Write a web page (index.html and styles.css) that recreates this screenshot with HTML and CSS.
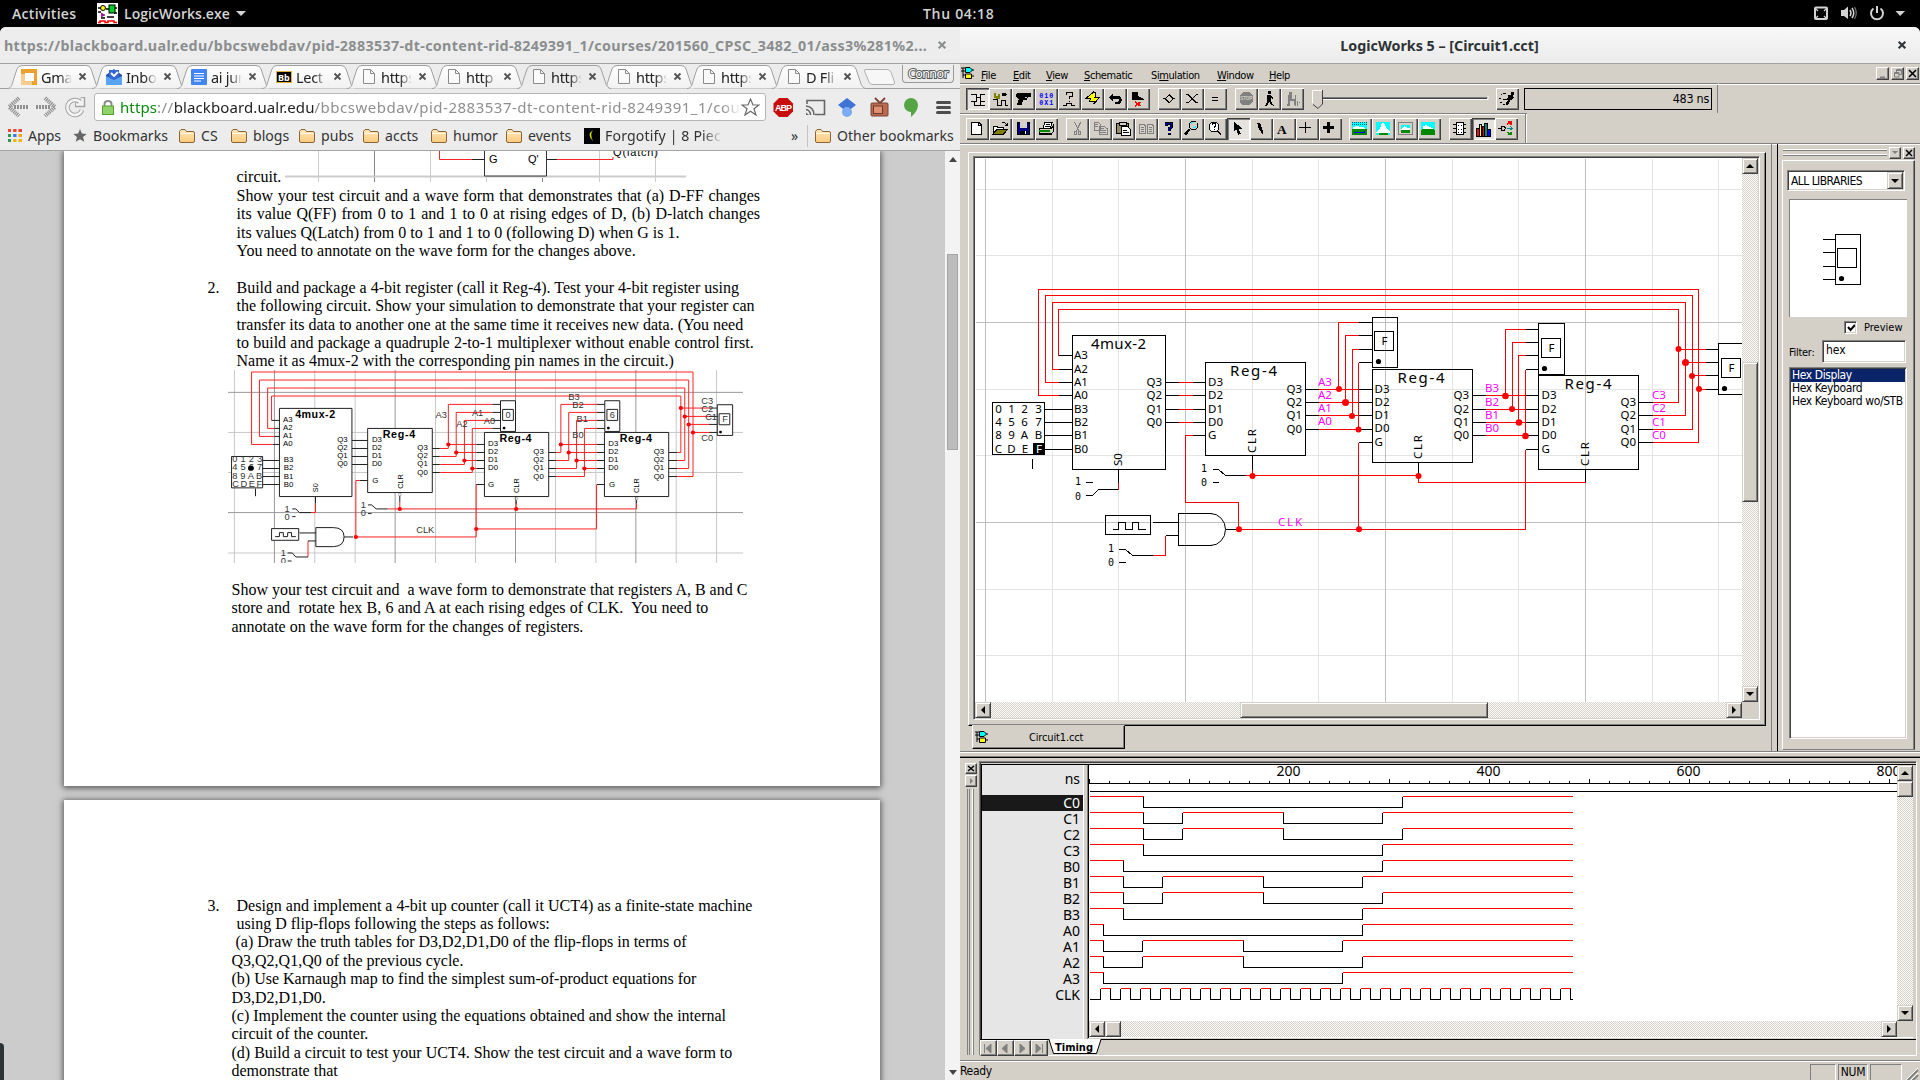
FILE: index.html
```html
<!DOCTYPE html>
<html lang="en">
<head>
<meta charset="utf-8">
<title>Desktop</title>
<link rel="stylesheet" href="styles.css">
</head>
<body>
<svg width="0" height="0" class="defs">
  <defs>
    <linearGradient id="tabfill" x1="0" y1="0" x2="0" y2="1"><stop offset="0" stop-color="#fff"/><stop offset="1" stop-color="#f1f1f1"/></linearGradient>
    <linearGradient id="fold" x1="0" y1="0" x2="0" y2="1"><stop offset="0" stop-color="#ffe9bd"/><stop offset="1" stop-color="#fcc97a"/></linearGradient>
    <symbol id="tabshape" viewBox="0 0 94 25"><path d="M0 24.5C5 24.5 5 20 7 14L10 5Q11.500 1.500 15 1.500H79Q83 1.500 84 5L88 17Q90 24.500 94 24.500" stroke="#a0a0a0"/></symbol>
    <symbol id="folder" viewBox="0 0 16 14"><path d="M.5 12V2.500L2 .5H6L7.500 2.500H14Q15.500 2.500 15.500 4V12Q15.500 13.500 14 13.500H2Q.5 13.500 .5 12Z" fill="url(#fold)" stroke="#8a6439"/><path d="M1 4.500H15" stroke="#fff4dc"/></symbol>
    <symbol id="file" viewBox="0 0 12 15"><path d="M.5.5H7.500L11.500 4.500V14.500H.5Z" fill="#fafafa" stroke="#8b8b8b"/><path d="M7.500.5V4.500H11.500" fill="none" stroke="#8b8b8b"/></symbol>
    <symbol id="x" viewBox="0 0 9 9"><path d="M1.500 1.500L7.500 7.500M7.500 1.500L1.500 7.500" stroke="currentColor" stroke-width="1.900"/></symbol>
    <symbol id="gates" viewBox="0 0 13 14"><path d="M0 5H4M2 2V12M0 2H4M2 9H4M11 4H13M11 10H13" stroke="#000"/><path d="M4.500 1.500H9L11.500 4L9 6.500H4.500Z" fill="#0ff" stroke="#000"/><path d="M4.500 8H10.500V12.500H4.500Z" fill="#ff0" stroke="#000"/></symbol>
  </defs>
</svg>

<header class="topbar">
  <span class="activities">Activities</span>
  <svg class="appicon" width="21" height="21" viewBox="0 0 21 21"><rect width="21" height="21" fill="#fff"/><path d="M1 5H4M1 9H4M9 6H12M17 5H20M17 10H20M4 15H8M10 14H17" stroke="#000" stroke-width="1.500"/><circle cx="6" cy="5" r="2.500" fill="#ff0" stroke="#000"/><rect x="12" y="2" width="6" height="8" fill="#0c2" stroke="#000"/><path d="M4 10L8 12L4 14" fill="#c0c" stroke="#000" stroke-width=".5"/><path d="M1 19.500H3V18H8V19.500H11V18H17V19.500H20" fill="none" stroke="#f00" stroke-width="1.500"/></svg>
  <span class="appname">LogicWorks.exe</span>
  <i class="tri"></i>
  <span class="clock">Thu 04:18</span>
  <svg class="tray" width="92" height="20" viewBox="1814 3 92 20" fill="none" stroke="#d3d3d3" stroke-width="2"><rect x="1815" y="7.500" width="12" height="11.500" rx="1"/><path d="M1815 8L1818 11M1827 8L1824 11M1815 19L1818 16M1827 19L1824 16" stroke-width="1.200"/><path d="M1841 10H1844L1848 6.500V19L1844 16H1841Z" fill="#d3d3d3" stroke="none"/><path d="M1850 10Q1852 13 1850 16M1852 8Q1855.500 13 1852 18" stroke-width="1.500"/><path d="M1854.500 7Q1858 13 1854.500 19" stroke="#777" stroke-width="1.200"/><path d="M1873.500 8.500A6 6 0 1 0 1880.500 8.500M1877 6V13"/><path d="M1895.500 11H1905L1900.200 16Z" fill="#d3d3d3" stroke="none"/></svg>
</header>

<main class="desk">
<section class="browser">
  <div class="titlebar dim"><span class="wtitle">https://blackboard.ualr.edu/bbcswebdav/pid-2883537-dt-content-rid-8249391_1/courses/201560_CPSC_3482_01/ass3%281%2...</span><svg width="10" height="10"><use href="#x"/></svg></div>
  <div class="tabs">
    <div class="tab"><svg class="shape"><use href="#tabshape"/></svg><svg class="ico" width="16" height="16"><rect width="16" height="16" fill="#eda12f"/><path d="M0 5V16H11V12H4V5Z" fill="#f7cc8c"/><rect x="4" y="4" width="9" height="8" fill="#fff"/></svg><span>Gma</span><svg class="cl"><use href="#x"/></svg></div>
    <div class="tab"><svg class="shape"><use href="#tabshape"/></svg><svg class="ico" width="16" height="16"><path d="M0 6L8 0L16 6V8L8 12L0 8Z" fill="#2b4fa8"/><path d="M3 1H13V8L8 11L3 8Z" fill="#3367d6"/><path d="M0 7L8 11L16 7V16H0Z" fill="#5aa2f2"/><path d="M5 4L8 7L12 3" stroke="#fff" stroke-width="1.800" fill="none"/></svg><span>Inbox</span><svg class="cl"><use href="#x"/></svg></div>
    <div class="tab"><svg class="shape"><use href="#tabshape"/></svg><svg class="ico" width="16" height="16"><rect width="16" height="16" rx="1" fill="#4285f4"/><path d="M3 4.500H13M3 7H13M3 9.500H13M3 12H10" stroke="#fff" stroke-width="1.200"/></svg><span>ai jun</span><svg class="cl"><use href="#x"/></svg></div>
    <div class="tab"><svg class="shape"><use href="#tabshape"/></svg><svg class="ico" width="16" height="16"><rect x=".5" y="2.500" width="15" height="11" fill="#000" stroke="#e0b13a"/><text x="2" y="11.500" class="bb">Bb</text></svg><span>Lect</span><svg class="cl"><use href="#x"/></svg></div>
    <div class="tab"><svg class="shape"><use href="#tabshape"/></svg><svg class="ico" width="16" height="15"><use href="#file"/></svg><span>https</span><svg class="cl"><use href="#x"/></svg></div>
    <div class="tab"><svg class="shape"><use href="#tabshape"/></svg><svg class="ico" width="16" height="15"><use href="#file"/></svg><span>http</span><svg class="cl"><use href="#x"/></svg></div>
    <div class="tab on"><svg class="shape"><use href="#tabshape"/></svg><svg class="ico" width="16" height="15"><use href="#file"/></svg><span>https</span><svg class="cl"><use href="#x"/></svg></div>
    <div class="tab"><svg class="shape"><use href="#tabshape"/></svg><svg class="ico" width="16" height="15"><use href="#file"/></svg><span>https</span><svg class="cl"><use href="#x"/></svg></div>
    <div class="tab"><svg class="shape"><use href="#tabshape"/></svg><svg class="ico" width="16" height="15"><use href="#file"/></svg><span>https</span><svg class="cl"><use href="#x"/></svg></div>
    <div class="tab"><svg class="shape"><use href="#tabshape"/></svg><svg class="ico" width="16" height="15"><use href="#file"/></svg><span>D Fli</span><svg class="cl"><use href="#x"/></svg></div>
    <svg class="newtab" width="34" height="18"><path d="M3 1.500H24Q27 1.500 28 4L31.500 14Q32 16.500 30 16.500H10Q7 16.500 6 14L1.500 3Q1 1.500 3 1.500Z" fill="#f7f7f7" stroke="#b0b0b0"/></svg>
    <span class="user">Connor</span>
  </div>
  <div class="urlbar">
    <svg class="nav" width="80" height="22" viewBox="6 96 80 22" fill="none" stroke="#8f8f8f"><path d="M19 98L9 107L19 116" stroke-width="4" stroke-dasharray="1.200 .8"/><path d="M14 107H28" stroke-width="4" stroke-dasharray="2 1"/><path d="M45 98L55 107L45 116" stroke-width="4" stroke-dasharray="1.200 .8"/><path d="M36 107H50" stroke-width="4" stroke-dasharray="2 1"/><path d="M81 103A7.500 7.500 0 1 0 82 110M83 97V105H75" stroke="#a3a3a3" stroke-width="4.500"/><path d="M81 103A7.500 7.500 0 1 0 82 110M82.500 98V104.500H76" stroke="#f4f4f4" stroke-width="2.500"/></svg>
    <div class="omni">
      <svg width="12" height="15"><path d="M2.500 6V4Q2.500 1 6 1T9.500 4V6" fill="none" stroke="#8d8d8d" stroke-width="2"/><rect x=".5" y="6" width="11" height="8.500" fill="#8fd46a" stroke="#56a036"/></svg>
      <span class="url"><b>https</b>://<em>blackboard.ualr.edu</em>/bbcswebdav/pid-2883537-dt-content-rid-8249391_1/cou</span>
      <svg width="19" height="18"><path d="M9.500 1L12 7H18L13 10.800L15 17L9.500 13.200L4 17L6 10.800L1 7H7Z" fill="#fff" stroke="#6a6a6a" stroke-width="1.200"/></svg>
    </div>
    <svg class="exts" width="182" height="22" viewBox="773 96 182 22"><path d="M779 98H787.500L793 103.500V111.500L787.500 117H779L773.500 111.500V103.500Z" fill="#c70d0d"/><text x="775" y="111" class="abp" textLength="17">ABP</text><g fill="none" stroke="#666" stroke-width="1.600"><path d="M807 104V100.500H824.500V114.500H815M806 106Q814 107 814 115M806 109.500Q810.500 110.500 810.500 115"/></g><path d="M806 112.500L809 115H806Z" fill="#666"/><path d="M847 98L856 105L847 112L838 105Z" fill="#3f74d6"/><circle cx="847" cy="112" r="5" fill="#7cabf5"/><rect x="871" y="103" width="17" height="13" rx="1" fill="#b96a50" stroke="#7b4436"/><rect x="873.500" y="106" width="9" height="7.500" fill="#e0906f" stroke="#6b3a2e"/><path d="M880 103L875 98M880 103L885 98" stroke="#7b4436" stroke-width="1.800"/><path d="M911 98A7 7 0 0 1 918 105Q918 111 911 117V112A7 7 0 0 1 911 98Z" fill="#56a544"/><path d="M937.500 102.500H949.500M937.500 107.500H949.500M937.500 112.500H949.500" stroke="#4d4d4d" stroke-width="3" stroke-linecap="round"/></svg>
  </div>
  <div class="marks">
    <a><svg width="14" height="13"><g stroke-width="3"><path d="M0 1.500H3" stroke="#e43"/><path d="M5.200 1.500H8.500" stroke="#e43"/><path d="M10.500 1.500H14" stroke="#e43"/><path d="M0 6.500H3" stroke="#2a9b57"/><path d="M5.200 6.500H8.500" stroke="#3b78e7"/><path d="M10.500 6.500H14" stroke="#f0a616"/><path d="M0 11.500H3" stroke="#2a9b57"/><path d="M5.200 11.500H8.500" stroke="#f0b416"/><path d="M10.500 11.500H14" stroke="#f0b416"/></g></svg>Apps</a>
    <a><svg width="14" height="13"><path d="M7 0L8.800 4.600L13.700 4.900L10 8L11.300 12.800L7 10.200L2.700 12.800L4 8L.3 4.900L5.200 4.600Z" fill="#666"/></svg>Bookmarks</a>
    <a><svg width="16" height="14"><use href="#folder"/></svg>CS</a>
    <a><svg width="16" height="14"><use href="#folder"/></svg>blogs</a>
    <a><svg width="16" height="14"><use href="#folder"/></svg>pubs</a>
    <a><svg width="16" height="14"><use href="#folder"/></svg>accts</a>
    <a><svg width="16" height="14"><use href="#folder"/></svg>humor</a>
    <a><svg width="16" height="14"><use href="#folder"/></svg>events</a>
    <a class="fade"><svg width="16" height="16"><rect width="16" height="16"/><path d="M9 2Q2 7 9 13Q5.500 7 9 2Z" fill="#cddc1b"/></svg>Forgotify | 8 Piec</a>
    <span>»</span>
    <a class="other"><svg width="16" height="14"><use href="#folder"/></svg>Other bookmarks</a>
  </div>
  <div class="viewer">
    <div class="pages">
      <article class="page one">
        <div class="lead">
          <span>circuit.</span>
          <svg width="401" height="32" viewBox="285 151 401 32" class="lib"><g stroke="#ccc"><path d="M318.500 151V182M430.500 151V182M486.500 178V182M599.500 151V182M655.500 151V182"/><path d="M374.500 151V182M542.500 178V182" stroke="#888"/><path d="M285 176.500H686" stroke-width="2"/></g><path d="M484.500 151V176H546.500V151" fill="#fff" stroke="#333"/><path d="M472 159.500H484M547 159.500H557" stroke="#222"/><path d="M439.500 151V159.500H472M557 159.500H613V157" fill="none" stroke="#f22"/><text x="489" y="163" font-size="11">G</text><text x="528" y="163" font-size="11">Q'</text><text x="613" y="156" font-size="11" textLength="45">Q(latch)</text></svg>
        </div>
        <p class="j">Show your test circuit and a wave form that demonstrates that (a) D-FF changes</p>
        <p class="j">its value Q(FF) from 0 to 1 and 1 to 0 at rising edges of D, (b) D-latch changes</p>
        <p>its values Q(Latch) from 0 to 1 and 1 to 0 (following D) when G is 1.</p>
        <p>You need to annotate on the wave form for the changes above.</p>
        <p>&nbsp;</p>
        <p><i class="n">2.</i>Build and package a 4-bit register (call it Reg-4). Test your 4-bit register using</p>
        <p>the following circuit. Show your simulation to demonstrate that your register can</p>
        <p>transfer its data to another one at the same time it receives new data. (You need</p>
        <p class="wide">to build and package a quadruple 2-to-1 multiplexer without enable control first.</p>
        <p>Name it as 4mux-2 with the corresponding pin names in the circuit.)</p>
        <svg class="fig lib" width="515" height="193" viewBox="50 60 1442 578" preserveAspectRatio="none">
          <g stroke="#c8c8c8"><path d="M68 60V640M293 60V640M406 60V640M631 60V640M743 60V640M967 60V640M1080 60V640M1305 60V640M1418 60V640M50 247H1492M50 367H1492M50 608H1492"/><path d="M180 60V640M518 60V640M855 60V640M1192 60V640M50 127H1492M50 487H1492" stroke="#999"/></g>
          <g fill="#fff" stroke="#222"><rect x="194" y="175" width="203" height="264"/><rect x="441" y="235" width="181" height="192"/><rect x="768" y="247" width="180" height="192"/><rect x="1104" y="247" width="180" height="192"/><rect x="813" y="152" width="42" height="92"/><rect x="1105" y="152" width="42" height="92"/><rect x="1420" y="164" width="43" height="92"/><rect x="819" y="178" width="30" height="33"/><rect x="1111" y="178" width="30" height="33"/><rect x="1425" y="191" width="30" height="33"/><rect x="60" y="319" width="87" height="94"/><rect x="172" y="535" width="76" height="35"/><path d="M296 532H345Q375 532 375 560T345 589H296Z"/></g>
          <g fill="none" stroke="#f22"><path d="M175 283H116V66H1352V379H1308M138 259H180M138 259V90H1340V355H1308M161 235V114H1329V331H1308M172 211V138H1318V307H1308M161 235H180"/><path d="M643 295H667V163H790M643 319H689V187H790M643 343H712V211H790M643 367H734V235H790M667 283H745M689 307H745M712 331H745M734 355H745"/><path d="M968 307H982V163H1083M968 331H1004V187H1083M968 355H1026V211H1083M968 379H1048V235H1083M982 283H1083M1004 307H1083M1026 331H1083M1048 355H1083M1318 174H1400M1329 199H1400M1340 223H1400M1352 247H1400"/><path d="M408 560V391H418M408 560H745V403M745 536H1082V403M497 476H1194V460M531 476V455M857 476V455M295 460V487H283M274 620V572"/></g>
          <g fill="none" stroke="#222"><path d="M172 211H194M180 235H194M180 259H194M175 283H194M147 331H194M147 355H194M147 379H194M147 403H194M397 271H441M397 295H441M397 319H441M397 343H441M622 295H643M622 319H643M622 343H643M622 367H643M790 163H813M790 187H813M790 211H813M790 235H813M745 283H768M745 307H768M745 331H768M745 355H768M745 403H768M948 307H968M948 331H968M948 355H968M948 379H968M1083 163H1105M1083 187H1105M1083 211H1105M1083 235H1105M1083 283H1104M1083 307H1104M1083 331H1104M1083 355H1104M1083 403H1104M1284 307H1308M1284 331H1308M1284 355H1308M1284 379H1308M1398 174H1420M1398 199H1420M1398 223H1420M1398 247H1420M418 391H441"/><path d="M295 439V460M531 437V455M857 450V460M1194 450V460M127 415V438M230 476H240L250 487H283M230 499H239M442 464H452L465 476H497M442 490H452M217 608H230L240 620H274M217 632H228M250 548H296M274 572H296M375 560H400M182 559H194V547H205V559H217V547H228V559H240"/><circle cx="531" cy="433" r="4"/><circle cx="857" cy="445" r="4"/><circle cx="1194" cy="445" r="4"/></g>
          <g fill="#f00"><circle cx="667" cy="283" r="6"/><circle cx="689" cy="307" r="6"/><circle cx="712" cy="331" r="6"/><circle cx="734" cy="355" r="6"/><circle cx="982" cy="283" r="6"/><circle cx="1004" cy="307" r="6"/><circle cx="1026" cy="331" r="6"/><circle cx="1048" cy="355" r="6"/><circle cx="1318" cy="174" r="6"/><circle cx="1329" cy="199" r="6"/><circle cx="1340" cy="223" r="6"/><circle cx="1352" cy="247" r="6"/><circle cx="531" cy="476" r="6"/><circle cx="857" cy="476" r="6"/><circle cx="408" cy="560" r="6"/><circle cx="745" cy="536" r="6"/></g>
          <circle cx="823" cy="234" r="4"/><circle cx="1115" cy="234" r="4"/><circle cx="1429" cy="246" r="4"/>
          <g class="figt"><text x="238" y="204" textLength="112">4mux-2</text><text x="483" y="265" textLength="91">Reg-4</text><text x="810" y="276" textLength="90">Reg-4</text><text x="1147" y="276" textLength="90">Reg-4</text></g>
          <g class="figl"><text x="204" y="217">A3</text><text x="204" y="241">A2</text><text x="204" y="265">A1</text><text x="204" y="289">A0</text><text x="206" y="337">B3</text><text x="206" y="361">B2</text><text x="206" y="385">B1</text><text x="206" y="410">B0</text><text x="356" y="277">Q3</text><text x="356" y="301">Q2</text><text x="356" y="325">Q1</text><text x="356" y="349">Q0</text><text x="453" y="277">D3</text><text x="453" y="301">D2</text><text x="453" y="325">D1</text><text x="453" y="349">D0</text><text x="454" y="397">G</text><text x="580" y="301">Q3</text><text x="580" y="325">Q2</text><text x="580" y="349">Q1</text><text x="580" y="373">Q0</text><text x="778" y="289">D3</text><text x="778" y="313">D2</text><text x="778" y="337">D1</text><text x="778" y="361">D0</text><text x="778" y="410">G</text><text x="905" y="313">Q3</text><text x="905" y="337">Q2</text><text x="905" y="361">Q1</text><text x="905" y="385">Q0</text><text x="1115" y="289">D3</text><text x="1115" y="313">D2</text><text x="1115" y="337">D1</text><text x="1115" y="361">D0</text><text x="1117" y="410">G</text><text x="1242" y="313">Q3</text><text x="1242" y="337">Q2</text><text x="1242" y="361">Q1</text><text x="1242" y="385">Q0</text><text transform="translate(302 426) rotate(-90)">S0</text><text transform="translate(539 416) rotate(-90)">CLR</text><text transform="translate(864 428) rotate(-90)">CLR</text><text transform="translate(1200 428) rotate(-90)">CLR</text></g>
          <g class="figk"><text x="62" y="337" textLength="84">0 1 2 3</text><text x="62" y="361" textLength="84">4 5 6 7</text><text x="62" y="385" textLength="84">8 9 A B</text><text x="62" y="409" textLength="84">C D E F</text><text x="827" y="204">0</text><text x="1119" y="204">6</text><text x="1434" y="216">F</text><text x="631" y="204">A3</text><text x="733" y="199">A1</text><text x="689" y="230">A2</text><text x="766" y="222">A0</text><text x="1003" y="150">B3</text><text x="1014" y="174">B2</text><text x="1026" y="217">B1</text><text x="1014" y="265">B0</text><text x="1375" y="162">C3</text><text x="1375" y="186">C2</text><text x="1386" y="211">C1</text><text x="1375" y="273">C0</text><text x="577" y="548">CLK</text><text x="208" y="484">1</text><text x="208" y="509">0</text><text x="422" y="472">1</text><text x="422" y="498">0</text><text x="198" y="616">1</text><text x="198" y="641">0</text></g>
          <circle cx="114" cy="354" r="8"/>
        </svg>
        <div class="after">
          <p>Show your test circuit and&nbsp; a wave form to demonstrate that registers A, B and C</p>
          <p class="wide">store and&nbsp; rotate hex B, 6 and A at each rising edges of CLK.&nbsp; You need to</p>
          <p>annotate on the wave form for the changes of registers.</p>
        </div>
      </article>
      <article class="page two">
        <p class="in"><i class="n">3.</i>Design and implement a 4-bit up counter (call it UCT4) as a finite-state machine</p>
        <p class="in">using D flip-flops following the steps as follows:</p>
        <p>&nbsp;(a) Draw the truth tables for D3,D2,D1,D0 of the flip-flops in terms of</p>
        <p>Q3,Q2,Q1,Q0 of the previous cycle.</p>
        <p>(b) Use Karnaugh map to find the simplest sum-of-product equations for</p>
        <p>D3,D2,D1,D0.</p>
        <p>(c) Implement the counter using the equations obtained and show the internal</p>
        <p>circuit of the counter.</p>
        <p>(d) Build a circuit to test your UCT4. Show the test circuit and a wave form to</p>
        <p>demonstrate that</p>
      </article>
    </div>
    <div class="vbar"><i class="up"></i><i class="thumb"></i><i class="down"></i></div>
  </div>
</section>

<section class="works">
  <div class="titlebar"><span class="wtitle">LogicWorks 5 – [Circuit1.cct]</span><svg width="10" height="10"><use href="#x"/></svg></div>
  <nav class="menu"><svg width="13" height="14"><use href="#gates"/></svg><span><u>F</u>ile</span><span><u>E</u>dit</span><span><u>V</u>iew</span><span><u>S</u>chematic</span><span>Si<u>m</u>ulation</span><span><u>W</u>indow</span><span><u>H</u>elp</span>
    <div class="mdibtns"><svg class="btn" width="13" height="13"><path d="M3 9.500H8" stroke="#808080" stroke-width="2"/></svg><svg class="btn" width="13" height="13" fill="none" stroke="#808080"><path d="M4.500 4V1.500H9.500V6.500H7M4 2.500H10M2.500 4.500H7V9H2.500ZM2 5.500H7"/></svg><svg class="btn" width="13" height="13"><path d="M2 2L9 9M9 2L2 9" stroke="#000" stroke-width="1.600"/></svg></div>
  </nav>
  <div class="bar bar1">
    <svg class="b on" viewBox="0 0 69 66"><path d="M15 19H31V28H43V19H57M15 40H30V29H43V40H57M24 40V52H42V41M42 52H57" class="k"/></svg><svg class="b" viewBox="0 0 69 66"><path d="M12 34H24V52H38V37H50V52H56M40 18H55" class="k"/><path d="M40 16H50V23H40Z"/><path d="M14 18H18V26H24V30H30V18" fill="none" stroke="#808000" stroke-width="6"/></svg><svg class="b" viewBox="0 0 69 66"><path d="M13 18L18 15H56V27H48L44 36H33L28 52H15L20 34L13 26Z"/><path d="M38 28H46" stroke="#d4d0c8" stroke-width="3"/></svg><svg class="b" viewBox="0 0 69 66"><text x="13" y="30" class="bits" textLength="42">010</text><text x="13" y="52" class="bits" textLength="42">0X1</text></svg><svg class="b" viewBox="0 0 69 66"><path d="M26 20V14H42V24H34V34M34 38V42M16 52H26V46H40V52H52" class="k"/></svg><svg class="b" viewBox="0 0 69 66"><path d="M38 12L14 32H28L26 40H40L38 48L56 28H42L44 14Z" fill="#ff0" stroke="#000" stroke-width="3"/></svg><svg class="b" viewBox="0 0 69 66"><path d="M28 16L15 28L28 40V32H42Q48 34 42 43H32V48H44Q54 44 53 34T42 24H28Z"/></svg><svg class="b" viewBox="0 0 69 66"><path d="M15 11H32V24L50 32V36H15Z"/><path d="M24 42L40 54M40 42L24 54" stroke="#f00" stroke-width="5"/></svg>
    <i class="g8"></i>
    <svg class="b" viewBox="0 0 69 66"><path d="M16 32H22L34 20L46 32H51M22 32L34 44L46 32" class="k"/></svg><svg class="b" viewBox="0 0 69 66"><path d="M16 20H22L34 32L46 20H52M16 44H22L34 32L46 44H52" class="k"/></svg><svg class="b" viewBox="0 0 69 66"><path d="M24 28H43M24 37H43" class="k"/></svg>
    <i class="g8"></i>
    <svg class="b" viewBox="0 0 69 66"><path d="M24 12H44L53 21V43L44 52H24L15 43V21Z" fill="#808080"/><text x="16" y="37" class="stop" textLength="36">STOP</text></svg><svg class="b" viewBox="0 0 69 66"><path d="M30 10H38V18H30ZM28 20H38V36L44 50H38L33 40L28 52H22L28 38Z"/><path d="M38 24L46 32M44 52H48M20 52H28" class="k"/></svg><svg class="b" viewBox="0 0 69 66" fill="#808080"><path d="M25 12H33V20H25ZM22 22H34V34H44V50H38V40H28L26 54H18L22 38Z"/><path d="M42 22V54M48 40V54M54 42H57" stroke="#808080" stroke-width="3"/></svg>
    <svg class="slider" width="184" height="22"><path d="M11 9.500H176" stroke="#808080"/><path d="M11 10.500H175" stroke="#404040"/><path d="M11 11.500H176V8" stroke="#fff" fill="none"/><path d="M1.500 2H10.500V16L6 21L1.500 16Z" fill="#d4d0c8"/><path d="M.5 17V2.500H10" fill="none" stroke="#fff"/><path d="M10.500 2V16L6 20.500L.5 16" fill="none" stroke="#404040"/></svg>
    <svg class="b" viewBox="0 0 69 66"><path d="M46 12H54V20H46ZM36 22H50V32L42 38L36 50H30V44L36 36H22V32H34Z"/><path d="M14 20H18M20 16H30M10 32H14M12 44H18M50 26L55 30M22 50H28" class="k"/></svg>
    <span class="ns">483 ns</span>
  </div>
  <div class="bar bar2">
    <svg class="b" viewBox="0 0 69 66"><path d="M17 12H38L47 21V49H17Z" fill="#fff" stroke="#000" stroke-width="3"/><path d="M38 12V21H47" class="k"/></svg><svg class="b" viewBox="0 0 69 66"><path d="M12 48V24H24L27 28H42V34" fill="#fff" stroke="#000" stroke-width="3"/><path d="M12 48L24 34H56L44 48Z" fill="#808000" stroke="#000" stroke-width="3"/><path d="M38 16Q46 10 52 20M54 14V21H47" class="k"/></svg><svg class="b" viewBox="0 0 69 66"><rect x="15" y="12" width="38" height="38" fill="#000080" stroke="#000" stroke-width="3"/><rect x="23" y="13" width="22" height="17" fill="#d4d0c8"/><path d="M25 38H44V50H25Z"/><path d="M38 40H42V48H38Z" fill="#fff"/></svg><svg class="b" viewBox="0 0 69 66"><path d="M24 30L30 12H52L46 30Z" fill="#fff" stroke="#000" stroke-width="3"/><path d="M32 18H46M30 24H44" class="k"/><path d="M12 30H50L54 24V42L48 50H12Z" fill="#d4d0c8" stroke="#000" stroke-width="3"/><path d="M12 39H46" stroke="#080" stroke-width="6"/><path d="M12 46H48" stroke="#000" stroke-width="4"/></svg>
    <i class="g8"></i>
    <svg class="b" viewBox="0 0 69 66"><path d="M26 12L38 38M44 12L32 38M24 39H30V50H24ZM38 39H44V50H38Z" class="gk"/></svg><svg class="b" viewBox="0 0 69 66"><path d="M15 13H28L34 19V38H15ZM30 24H44L54 32V50H30ZM19 20H28M19 26H28M34 32H44M34 38H50M34 44H50" class="gk"/></svg><svg class="b" viewBox="0 0 69 66"><path d="M14 15H50V46H14Z" fill="#948f60" stroke="#000" stroke-width="3"/><path d="M22 12H42V21H22Z" fill="#d4d0c8" stroke="#000" stroke-width="3"/><path d="M28 26H46L56 34V51H28Z" fill="#fff" stroke="#000" stroke-width="3"/><path d="M32 36H44M32 43H52" class="k"/></svg><svg class="b" viewBox="0 0 69 66"><path d="M14 18H26L31 23V46H14ZM37 18H49L54 23V46H37ZM18 28H27M18 34H27M18 40H27M41 28H50M41 34H50M41 40H50" class="gk"/></svg><svg class="b" viewBox="0 0 69 66"><path d="M24 24V16H40V28L33 32V38M33 44V50" fill="none" stroke="#000" stroke-width="9"/><path d="M24 24V16H40V28L33 32V38M33 44V49" fill="none" stroke="#000080" stroke-width="5"/></svg><svg class="b" viewBox="0 0 69 66"><path d="M26 34L12 50" stroke="#000" stroke-width="7"/><circle cx="38" cy="22" r="13" fill="#d4d0c8" stroke="#000" stroke-width="3"/><path d="M30 16L36 12M38 30L46 26" stroke="#0ff" stroke-width="4"/></svg><svg class="b" viewBox="0 0 69 66"><circle cx="30" cy="27" r="15" fill="#fff" stroke="#000" stroke-width="3"/><path d="M25 22V17H35V25H30V30M30 34V37" class="k"/><path d="M40 38L52 50" stroke="#000" stroke-width="5"/></svg><svg class="b on" viewBox="0 0 69 66"><path d="M20 10V42L28 35L34 50L41 47L35 32H46Z"/></svg><svg class="b" viewBox="0 0 69 66"><path d="M22 14H30L38 36V50L24 28Z"/></svg><svg class="b" viewBox="0 0 69 66"><text x="12" y="49" class="serifA" textLength="34">A</text></svg><svg class="b" viewBox="0 0 69 66"><path d="M10 29H44M27 13V46" class="k"/></svg><svg class="b" viewBox="0 0 69 66"><path d="M12 29H46M29 13V46" stroke="#000" stroke-width="9"/></svg>
    <i class="g8"></i>
    <svg class="b" viewBox="0 0 69 66"><rect x="10" y="12" width="45" height="38" fill="#0ff"/><path d="M10 14H55M10 19H55" stroke="#066" stroke-width="3" stroke-dasharray="3 3"/><path d="M12 36V28L24 22L32 28L44 26L52 36Z" fill="#fff"/><path d="M10 34H55V50H10Z" fill="#080"/><path d="M16 44H46V40" stroke="#00f" stroke-width="4" fill="none"/></svg><svg class="b" viewBox="0 0 69 66"><rect x="12" y="12" width="42" height="38" fill="#0ff"/><path d="M12 44L24 30L30 14H36L44 30L54 40V44Z" fill="#fff"/><path d="M20 45H48V50H20Z" fill="#080"/></svg><svg class="b" viewBox="0 0 69 66"><rect x="11" y="13" width="42" height="37" fill="#d4d0c8" stroke="#808080" stroke-width="3"/><rect x="18" y="20" width="28" height="23" fill="#0ff"/><path d="M18 34L28 25L46 32V37H18Z" fill="#fff"/><path d="M18 37H46V44H18Z" fill="#080"/></svg><svg class="b" viewBox="0 0 69 66"><rect x="10" y="12" width="42" height="24" fill="#0ff"/><path d="M14 32V26L24 20L34 26L46 32Z" fill="#fff"/><path d="M10 36L16 32H46L52 38V50H10Z" fill="#080"/></svg>
    <i class="g8"></i>
    <svg class="b" viewBox="0 0 69 66"><path d="M22 12H42V50H22ZM12 19H22M12 31H22M12 43H22M42 19H52M42 31H52M42 43H52" class="k chip"/><path d="M28 22V44M36 22V44" stroke="#000" stroke-width="3" stroke-dasharray="3 7"/></svg><svg class="b on" viewBox="0 0 69 66"><path d="M12 30H22V54H12ZM30 24H36V54H30Z" fill="#f00" stroke="#000" stroke-width="3"/><path d="M22 18H28V54H22Z" fill="#ff0" stroke="#000" stroke-width="3"/><path d="M38 15H45V54H38Z" fill="#088" stroke="#000" stroke-width="3"/><path d="M47 34H54V54H47Z" fill="#00f" stroke="#000" stroke-width="3"/></svg><svg class="b" viewBox="0 0 69 66"><path d="M10 31H18M18 24H27L32 31L27 38H18Z" class="k"/><path d="M36 20L46 13M40 12H48V20" stroke="#f00" stroke-width="4" fill="none"/><path d="M36 31H52M46 25L52 31L46 37" stroke="#088" stroke-width="4" fill="none"/><path d="M36 42L46 50M48 42V50H40" stroke="#080" stroke-width="4" fill="none"/></svg>
    <i class="endsep"></i>
  </div>

  <div class="work">
    <div class="mdi">
      <div class="frame">
      <div class="sunken sheet">
        <svg class="schem" width="767" height="544" viewBox="975 158 767 544">
          <g transform="translate(.5 .5)">
          <g class="w" stroke="#e4e4e4"><path d="M1052 158V702M1118 158V702M1252 158V702M1318 158V702M1452 158V702M1518 158V702M1652 158V702M1718 158V702M975 189H1742M975 255H1742M975 389H1742M975 455H1742M975 589H1742M975 655H1742"/><path d="M985 158V702M1185 158V702M1385 158V702M1585 158V702M975 322H1742M975 522H1742" stroke="#c0c0c0"/></g>
          <g class="w" stroke="#f00"><path d="M1058 395H1038V289H1698V442H1652M1058 382H1045V295H1692V429H1652M1058 369H1052V302H1685V415H1652M1058 355V309H1678V402H1652"/><path d="M1178 382H1192M1178 395H1192M1178 409H1192M1178 422H1192M1192 435H1185V502H1238V529H1525V449M1358 529V442M1252 469V475M1245 475H1418V482H1585M1118 482V489M1152 555H1165V535"/><path d="M1318 389H1358M1318 402H1358M1318 415H1358M1318 429H1358V362M1338 389V322H1358M1345 402V335H1358M1352 415V349H1358"/><path d="M1485 395H1525M1485 409H1525M1485 422H1525M1485 435H1525V369M1505 395V329H1525M1512 409V342H1525M1518 422V355H1525M1678 349H1705M1685 362H1705M1692 375H1705M1698 389H1705"/></g>
          <g class="w" stroke="#000"><path d="M1072 335H1165V469H1072ZM1205 362H1305V455H1205ZM1372 369H1472V462H1372ZM1538 375H1638V469H1538ZM1372 317H1397V367H1372ZM1374 331H1393V350H1374ZM1538 323H1564V374H1538ZM1541 338H1560V357H1541ZM1745 343H1718V394H1745M1721 358H1740V377H1721ZM992 402H1044V454H992ZM1105 515H1150V534H1105Z"/><path d="M1058 355H1072M1058 369H1072M1058 382H1072M1058 395H1072M1044 409H1072M1044 422H1072M1044 435H1072M1044 449H1072M1165 382H1178M1192 382H1205M1165 395H1178M1192 395H1205M1165 409H1178M1192 409H1205M1165 422H1178M1192 422H1205M1192 435H1205M1305 389H1318M1305 402H1318M1305 415H1318M1305 429H1318M1358 389H1372M1358 402H1372M1358 415H1372M1358 429H1372M1358 442H1372M1358 322H1372M1358 335H1372M1358 349H1372M1358 362H1372M1472 395H1485M1472 409H1485M1472 422H1485M1472 435H1485M1525 395H1538M1525 409H1538M1525 422H1538M1525 435H1538M1525 449H1538M1525 329H1538M1525 342H1538M1525 355H1538M1525 369H1538M1638 402H1652M1638 415H1652M1638 429H1652M1638 442H1652M1705 349H1718M1705 362H1718M1705 375H1718M1705 389H1718"/><path d="M1118 469V482M1252 455V469M1418 462V475M1585 469V481M1032 458V468M1085 482H1092M1085 495H1092L1098 489H1117M1212 469H1218L1225 475H1245M1212 482H1218M1118 549H1125L1132 555H1152M1118 562H1125M1112 529H1118V522H1125V529H1132V522H1138V529H1145M1152 522H1178M1165 535H1178M1225 529H1238M1211 513H1178V545H1211"/></g>
          <path d="M1210 513A15 16 0 0 1 1210 545" fill="none" stroke="#000"/>
          <g fill="#f00"><circle cx="1252" cy="475.500" r="3"/><circle cx="1418" cy="475.500" r="3"/><circle cx="1238.500" cy="528.800" r="3"/><circle cx="1358.500" cy="528.800" r="3"/><circle cx="1338.500" cy="388.500" r="3"/><circle cx="1345" cy="402" r="3.500"/><circle cx="1351.500" cy="415.500" r="3"/><circle cx="1358" cy="429" r="3"/><circle cx="1505" cy="395.500" r="3.300"/><circle cx="1511.500" cy="408.500" r="3"/><circle cx="1518.500" cy="422" r="3.300"/><circle cx="1525" cy="435.500" r="3.300"/><circle cx="1678" cy="348.500" r="3"/><circle cx="1685" cy="362" r="3.500"/><circle cx="1691.500" cy="375.500" r="3"/><circle cx="1698.500" cy="388.500" r="3"/></g>
          <circle cx="1378" cy="361" r="2.600"/><circle cx="1544" cy="368" r="2.600"/><circle cx="1724" cy="388" r="2.600"/>
          <rect x="1032.500" y="442.500" width="12" height="12"/>
          </g>
          <g class="tt"><text x="1091" y="349" textLength="55">4mux-2</text><text x="1230" y="376" textLength="47">Reg-4</text><text x="1397.500" y="383" textLength="47">Reg-4</text><text x="1564.500" y="389" textLength="47">Reg-4</text></g>
          <g><text x="1074" y="359">A3</text><text x="1074" y="373">A2</text><text x="1074" y="386">A1</text><text x="1074" y="399">A0</text><text x="1074" y="413">B3</text><text x="1074" y="426">B2</text><text x="1074" y="439">B1</text><text x="1074" y="453">B0</text>
          <text x="1208" y="386">D3</text><text x="1208" y="399">D2</text><text x="1208" y="413">D1</text><text x="1208" y="426">D0</text><text x="1208" y="439">G</text>
          <text x="1374.500" y="393">D3</text><text x="1374.500" y="406">D2</text><text x="1374.500" y="419">D1</text><text x="1374.500" y="432">D0</text><text x="1374.500" y="446">G</text>
          <text x="1541.500" y="399">D3</text><text x="1541.500" y="413">D2</text><text x="1541.500" y="426">D1</text><text x="1541.500" y="439">D0</text><text x="1541.500" y="453">G</text></g>
          <g text-anchor="end"><text x="1162" y="386">Q3</text><text x="1162" y="399">Q2</text><text x="1162" y="413">Q1</text><text x="1162" y="426">Q0</text>
          <text x="1302" y="393">Q3</text><text x="1302" y="406">Q2</text><text x="1302" y="419">Q1</text><text x="1302" y="433">Q0</text>
          <text x="1469" y="399">Q3</text><text x="1469" y="413">Q2</text><text x="1469" y="426">Q1</text><text x="1469" y="439">Q0</text>
          <text x="1636" y="406">Q3</text><text x="1636" y="419">Q2</text><text x="1636" y="433">Q1</text><text x="1636" y="446">Q0</text></g>
          <text transform="translate(1122 466) rotate(-90)">S0</text><text transform="translate(1255.500 453) rotate(-90)" textLength="24">CLR</text><text transform="translate(1421.500 459) rotate(-90)" textLength="24">CLR</text><text transform="translate(1588.500 466) rotate(-90)" textLength="24">CLR</text>
          <g fill="#f0f"><text x="1318" y="386">A3</text><text x="1318" y="399">A2</text><text x="1318" y="412">A1</text><text x="1318" y="425">A0</text><text x="1485" y="392">B3</text><text x="1485" y="406">B2</text><text x="1485" y="419">B1</text><text x="1485" y="432">B0</text><text x="1652" y="399">C3</text><text x="1652" y="412">C2</text><text x="1652" y="426">C1</text><text x="1652" y="439">C0</text><text x="1278" y="526" textLength="24">CLK</text></g>
          <g text-anchor="middle"><text x="998.500" y="413">0</text><text x="1011.500" y="413">1</text><text x="1024.500" y="413">2</text><text x="1038.500" y="413">3</text><text x="998.500" y="426">4</text><text x="1011.500" y="426">5</text><text x="1024.500" y="426">6</text><text x="1038.500" y="426">7</text><text x="998.500" y="439">8</text><text x="1011.500" y="439">9</text><text x="1024.500" y="439">A</text><text x="1038.500" y="439">B</text><text x="998.500" y="453">C</text><text x="1011.500" y="453">D</text><text x="1025" y="453">E</text><text x="1039" y="453" fill="#fff">F</text><text x="1384.500" y="345">F</text><text x="1551.500" y="352">F</text><text x="1731.500" y="372">F</text></g>
          <g class="mono"><text x="1075" y="485">1</text><text x="1075" y="500">0</text><text x="1201" y="472">1</text><text x="1201" y="486">0</text><text x="1108" y="552">1</text><text x="1108" y="566">0</text></g>
        </svg>
        <div class="vs"><i class="sb u"></i><i class="sp"></i><i class="sb th"></i><i class="sp2"></i><i class="sb d"></i></div>
        <div class="hs"><i class="sb l"></i><i class="sp"></i><i class="sb th"></i><i class="sp2"></i><i class="sb r"></i></div>
        <div class="corner"></div>
      </div>
      </div>
      <div class="doctab"><svg width="13" height="14"><use href="#gates"/></svg><span>Circuit1.cct</span></div>
    </div>
    <aside class="libs">
      <div class="grip"><i></i><svg class="btn" width="12" height="12"><path d="M2 3H8L5 6Z" fill="#808080"/></svg><svg class="btn" width="12" height="12"><path d="M2 2L8 8M8 2L2 8" stroke="#000" stroke-width="1.500"/></svg></div>
      <div class="libpane">
        <div class="sunken combo"><span>ALL LIBRARIES</span><i class="sb d"></i></div>
        <div class="preview"><svg width="117" height="117"><g class="w" stroke="#000" transform="translate(-.5 .5)"><path d="M46 34H71V84H46ZM48 48H67V67H48ZM33 39H46M33 52H46M33 66H46M33 79H46"/></g><circle cx="51.500" cy="78.500" r="2.600"/></svg></div>
        <label class="chk"><svg class="sunken" width="12" height="12"><path d="M2 4L4.500 7L9 2" stroke="#000" stroke-width="2" fill="none"/></svg>Preview</label>
        <div class="filter"><span>Filter:</span><div class="sunken">hex</div></div>
        <ul class="sunken"><li class="sel">Hex Display</li><li>Hex Keyboard</li><li>Hex Keyboard wo/STB</li></ul>
      </div>
    </aside>
  </div>

  <div class="dock">
    <div class="strip"><svg class="btn" width="12" height="11"><path d="M2 2L8 7M8 2L2 7" stroke="#000" stroke-width="1.500"/></svg><svg class="btn" width="12" height="12"><path d="M4 2L7 5L4 8Z" fill="#808080"/></svg><i></i></div>
    <div class="timing">
      <div class="trow">
        <div class="names"><span class="ns2">ns</span><span class="sel">C0</span><span>C1</span><span>C2</span><span>C3</span><span>B0</span><span>B1</span><span>B2</span><span>B3</span><span>A0</span><span>A1</span><span>A2</span><span>A3</span><span>CLK</span></div>
        <i class="split"></i>
        <div class="plot">
          <svg class="waves" width="808" height="256" viewBox="0 765 808 256">
            <g class="w" transform="translate(.5 .5)" stroke="#000">
              <path d="M0 783H808M0 791H808"/>
              <path d="M0 780.500H808" stroke-width="5" stroke-dasharray="1 99" transform="translate(-.5 0)"/><path d="M0 782H808" stroke-width="3" stroke-dasharray="1 19" transform="translate(-.5 0)"/>
              <g stroke="#f00"><path d="M0 796H54M313 796H483M0 812H54M93 812H194M293 812H483M0 828H54M93 828H194M313 828H483M0 844H54M293 844H483M0 860H34M293 860H483M0 876H34M73 876H174M273 876H483M0 892H34M73 892H174M293 892H483M0 908H34M273 908H483M0 924H14M273 924H483M0 940H14M53 940H154M253 940H483M0 956H14M53 956H154M273 956H483M0 972H14M253 972H483"/><path d="M11 988H483" stroke-dasharray="10 10"/></g>
              <path d="M54 796V807H313V796M54 812V823H93V812M194 812V823H293V812M54 828V839H93V828M194 828V839H313V828M54 844V855H293V844M34 860V871H293V860M34 876V887H73V876M174 876V887H273V876M34 892V903H73V892M174 892V903H293V892M34 908V919H273V908M14 924V935H273V924M14 940V951H53V940M154 940V951H253V940M14 956V967H53V956M154 956V967H273V956M14 972V983H253V972M0 999H11"/><path d="M21 999H483" stroke-dasharray="10 10"/><path d="M10.500 994H482" stroke-width="11" stroke-dasharray="1 9"/>
            </g>
            <g text-anchor="middle"><text x="199.500" y="776">200</text><text x="399.500" y="776">400</text><text x="599.500" y="776">600</text><text x="799.500" y="776">800</text></g>
          </svg>
          <div class="vs"><i class="sb u"></i><i class="sb th"></i><i class="sp"></i><i class="sb d"></i></div>
          <div class="hs"><i class="sb l"></i><i class="sb th"></i><i class="sp"></i><i class="sb r"></i></div>
          <div class="corner"></div>
        </div>
      </div>
      <div class="sheets"><svg class="btn" width="17" height="16"><path d="M3.500 3V12M10 3V12L5 7.500Z"/></svg><svg class="btn" width="17" height="16"><path d="M9 3V12L4 7.500Z"/></svg><svg class="btn" width="17" height="16"><path d="M5 3V12L10 7.500Z"/></svg><svg class="btn" width="17" height="16"><path d="M10.500 3V12M4 3V12L9 7.500Z"/></svg><div class="sheet1"><svg width="54" height="17"><path d="M.5-1L5.500 14.500H48.500L53.500-1Z" fill="#fff" stroke="#000"/></svg><b>Timing</b></div></div>
    </div>
  </div>
  <footer class="status"><span>Ready</span><i class="p1"></i><i class="p2">NUM</i><i class="p3"></i><svg width="16" height="18"><path d="M2 18L14 6M7 18L14 11M12 18L14 16" stroke="#808080" stroke-width="2"/><path d="M0 18L14 4M5 18L14 9" stroke="#fff"/></svg></footer>
</section>
</main>
<div class="handle"></div>
</body>
</html>
```
FILE: styles.css
```css
* { box-sizing: border-box; }
body { margin: 0; width: 1920px; height: 1080px; overflow: hidden; background: #000; font-family: "Noto Sans", sans-serif; font-size: 15px; display: flex; flex-direction: column; position: relative; }
svg { display: block; flex: none; }
.defs { position: absolute; }
i { font-style: normal; }
.topbar { height: 27px; flex: none; background: #000; color: #d3d3d3; display: flex; align-items: center; font-family: "Open Sans", sans-serif; font-weight: 600; font-size: 14px; white-space: nowrap; }
.activities { width: 85px; margin-left: 12px; letter-spacing: .3px; }
.appicon { margin-right: 6px; margin-top: -1px; }
.appname { width: 107px; letter-spacing: .05px; }
.tri { border: 5px solid transparent; border-top-color: #d3d3d3; border-bottom: 0; margin-left: 5px; }
.clock { margin-left: 677px; width: 100px; letter-spacing: .7px; }
.tray { margin-left: auto; margin-right: 14px; margin-top: -1px; }
.desk { display: flex; height: 1053px; }
.browser, .works { width: 960px; display: flex; flex-direction: column; }
.browser { background: #ececec; border-top-left-radius: 6px; overflow: hidden; }
.works { background: #d4d0c8; border-top-right-radius: 6px; overflow: hidden; font: 11px "DejaVu Sans Condensed", "DejaVu Sans", sans-serif; font-stretch: condensed; color: #000; }
.titlebar { height: 37px; flex: none; display: flex; align-items: center; background: linear-gradient(#f8f8f8, #ebebeb); border-bottom: 1px solid #a2a2a2; font: 700 14.300px "Noto Sans", sans-serif; color: #2e3436; white-space: nowrap; padding-right: 13px; }
.titlebar .wtitle { flex: 1; text-align: center; padding-left: 22px; }
.dim { background: #ededed; color: #8b8e8f; padding-left: 4px; }
.dim .wtitle { text-align: left; padding: 0; letter-spacing: .33px; }
.tabs { height: 25px; flex: none; display: flex; padding-left: 7px; border-bottom: 1px solid #a0a0a0; }
.tab { width: 85px; height: 25px; position: relative; display: flex; align-items: center; padding: 0 0 0 14px; color: #222; }
.tab .shape { position: absolute; left: 0; top: 0; width: 94px; height: 25px; fill: url(#tabfill); }
.tab.on { z-index: 2; }
.tab.on .shape { fill: #ececec; }
.tab.on::after { content: ""; position: absolute; left: 3px; right: -6px; bottom: 0; height: 1px; background: #ececec; }
.tab .ico { position: relative; }
.tab > span { position: relative; width: 31px; margin-left: 4px; overflow: hidden; white-space: nowrap; font-size: 14.500px; letter-spacing: -.3px; -webkit-mask-image: linear-gradient(90deg, #000 60%, transparent); mask-image: linear-gradient(90deg, #000 60%, transparent); }
.tab .cl { position: relative; width: 9px; height: 9px; margin-left: 6px; color: #555; }
.bb { font: 700 9px "Noto Sans", sans-serif; fill: #fff; }
.newtab { margin: 4px 0 0 6px; }
.user { width: 52px; height: 18px; margin: 1px 0 0 5px; border: 1px solid #999; border-top: 0; border-radius: 0 0 4px 4px; font: 12.500px/17px "Noto Sans", sans-serif; text-align: center; color: #fff; -webkit-text-stroke: 2px #555; paint-order: stroke fill; letter-spacing: -.6px; }
.urlbar { height: 36px; flex: none; display: flex; align-items: center; padding-left: 6px; }
.nav { margin-top: -1px; }
.omni { margin-left: 8px; width: 672px; height: 28px; background: #fff; border: 1px solid #b6b6b6; border-radius: 3px; display: flex; align-items: center; padding: 0 3px 0 7px; }
.url { margin-left: 6px; width: 621px; overflow: hidden; white-space: nowrap; color: #8f8f8f; letter-spacing: .5px; -webkit-mask-image: linear-gradient(90deg, #000 97%, transparent); mask-image: linear-gradient(90deg, #000 97%, transparent); }
.url b { color: #0a8a0a; font-weight: 400; letter-spacing: .1px; }
.url em { color: #222; font-style: normal; letter-spacing: .1px; }
.exts { margin-left: 7px; }
.abp { font: 700 9px "Liberation Sans", sans-serif; fill: #fff; }
.marks { height: 27px; flex: none; display: grid; grid-template-columns: 65px 106px 52px 68px 64px 68px 75px 78px 207px 16px 1fr; margin-top: -1px; padding: 0 0 3px 8px; border-bottom: 1px solid #a4a4a4; color: #333; white-space: nowrap; font-size: 14.100px; align-items: center; }
.marks a { display: flex; align-items: center; gap: 6px; height: 22px; }
.marks .fade { width: 139px; gap: 5px; overflow: hidden; letter-spacing: .15px; -webkit-mask-image: linear-gradient(90deg, #000 85%, transparent); mask-image: linear-gradient(90deg, #000 85%, transparent); }
.marks .other { border-left: 1px solid #c4c4c4; padding-left: 7px; }
.viewer { flex: 1; display: flex; min-height: 0; }
.pages { width: 945px; background: #ccc; overflow: hidden; padding-left: 64px; }
.page { width: 816px; background: #fff; box-shadow: 0 1px 6px 1px #555; font: 16px/18.400px "Liberation Serif", serif; color: #000; padding-left: 172.500px; white-space: nowrap; }
.page p { margin: 0; position: relative; }
.page .wide { word-spacing: .25px; }
.one { height: 635px; }
.two { height: 500px; margin-top: 14px; padding: 96.500px 0 0 167.500px; }
.two .in { padding-left: 5px; }
.n { position: absolute; left: -29px; }
.two .n { left: -24px; }
.page .j { width: 523.500px; text-align-last: justify; }
.lead { height: 35.800px; display: flex; align-items: flex-start; gap: 0; }
.lead span { width: 48.500px; padding-top: 17px; }
.fig { margin: -1px 0 0 -8.500px; }
.lib { font-family: "Liberation Sans", sans-serif; }
.fig path, .fig rect { vector-effect: non-scaling-stroke; stroke-width: 1; }
.figt { font-size: 30px; font-weight: 700; }
.figl { font-size: 22px; }
.figk { font-size: 26px; fill: #333; }
.after { padding-top: 18px; margin-left: -5px; }
.vbar { width: 15px; background: #f3f3f3; display: flex; flex-direction: column; align-items: center; padding-top: 6px; }
.up { border: 4px solid transparent; border-top: 0; border-bottom: 5px solid #444; }
.thumb { width: 11px; height: 196px; margin-top: 92px; background: #bcbcbc; border: 1px solid #a5a5a5; }
.down { border: 4px solid transparent; border-bottom: 0; border-top: 5px solid #444; margin-top: auto; margin-bottom: 5px; }
.handle { position: absolute; left: 0; top: 1043px; width: 4px; height: 37px; background: #2e3436; border-top-right-radius: 4px; }

.menu { height: 19px; flex: none; display: grid; grid-template-columns: 20px 32px 33px 38px 67px 66px 52px 60px 1fr; align-items: center; padding: 3px 1px 0 1px; white-space: nowrap; letter-spacing: -.4px; }
.menu > svg { margin-top: -4px; }
.mdibtns { justify-self: end; display: flex; gap: 2px; margin-top: -3px; }
.btn { background: #d4d0c8; border: 1px solid; border-color: #fff #404040 #404040 #fff; box-shadow: inset -1px -1px #808080; }
.bar { display: flex; border-top: 1px solid #808080; box-shadow: inset 0 1px #fff; padding: 4px 0 0 6px; flex: none; }
.bar1 { height: 30px; background: #d4d0c8; width: 758px; box-shadow: inset 0 1px #fff, inset -1px 0 #808080; position: relative; }
.bar1::after { content: ""; position: absolute; left: 758px; right: -202px; top: -1px; border-top: 1px solid #808080; border-bottom: 1px solid #fff; border-left: 1px solid #fff; }
.bar2 { height: 30px; width: 567px; }
.b { width: 23px; height: 22px; background: #d4d0c8; border: 0; box-shadow: inset 1px 1px #fff, inset -1px -1px #404040, inset -2px -2px #808080; shape-rendering: crispEdges; }
.b.on { background: #e6e3de; box-shadow: inset 1px 1px #404040, inset 2px 2px #808080, inset -1px -1px #fff; }
.k { fill: none; stroke: #000; stroke-width: 3; }
.chip { fill: #fff; }
.gk { fill: none; stroke: #808080; stroke-width: 3; }
.bits { font: 700 20px "Liberation Mono", monospace; fill: #00f; }
.stop { font: 700 14px "Liberation Sans", sans-serif; fill: #d4d0c8; }
.serifA { font: 700 40px "Liberation Serif", serif; }
.g8 { width: 8px; }
.slider { margin-left: 8px; }
.ns { width: 188px; height: 22px; margin-left: 5px; border: 1px solid #000; text-align: right; padding-right: 2px; font-size: 12.500px; line-height: 20px; letter-spacing: -.3px; }
.endsep { width: 2px; height: 29px; margin: -4px 0 0 7px; border-left: 1px solid #808080; background: #fff; }
.work { height: 608px; flex: none; display: flex; border-top: 1px solid #808080; box-shadow: inset 0 1px #fff; }
.mdi { width: 812px; padding: 8px 0 0 8px; border-right: 1px solid #808080; }
.frame { width: 798px; height: 574px; border: 1px solid; border-color: #fff #000 #000 #fff; box-shadow: inset -1px -1px #808080; padding: 3px 0 0 4px; }
.sunken { border: 1px solid; border-color: #808080 #fff #fff #808080; box-shadow: inset 1px 1px #404040, inset -1px -1px #d4d0c8; padding: 1px; background: #fff; }
.sheet { width: 787px; height: 564px; display: grid; grid-template-columns: 767px 16px; grid-template-rows: 544px 16px; }
.schem { font: 11.500px "Noto Sans", sans-serif; }
.w { fill: none; shape-rendering: crispEdges; stroke-width: 1; }
.tt { font-size: 15px; }
.mono { font: 10px "DejaVu Sans Mono", monospace; }
.vs, .hs { display: flex; background: repeating-conic-gradient(#fff 0 25%, #d4d0c8 0 50%) 0 0/2px 2px; }
.vs { flex-direction: column; }
.sb { flex: none; width: 16px; height: 16px; background: #d4d0c8; border: 1px solid; border-color: #d4d0c8 #404040 #404040 #d4d0c8; box-shadow: inset 1px 1px #fff, inset -1px -1px #808080; display: grid; place-items: center; }
.sb::before { content: ""; border: 4px solid transparent; }
.sb.th::before { display: none; }
.u::before { border-top: 0; border-bottom-color: #000; }
.d::before { border-bottom: 0; border-top-color: #000; }
.l::before { border-left: 0; border-right-color: #000; }
.r::before { border-right: 0; border-left-color: #000; }
.sheet .vs .sp { height: 188px; }
.sheet .vs .th { height: 140px; }
.sheet .vs .sp2, .sheet .hs .sp2, .plot .sp { flex: 1; }
.sheet .hs .sp { width: 249px; }
.sheet .hs .th { width: 248px; }
.corner { background: #d4d0c8; }
.doctab { width: 153px; height: 24px; margin: -1px 0 0 4px; border: 1px solid; border-color: #d4d0c8 #000 #000 #fff; box-shadow: inset -1px -1px #808080; background: #d4d0c8; display: flex; align-items: center; padding-left: 2px; }
.doctab span { margin-left: 41px; letter-spacing: -.15px; }
.libs { flex: 1; margin-left: 5px; border-left: 1px solid #000; padding: 1px 0 0 4px; }
.grip { display: flex; height: 15px; align-items: center; gap: 2px; }
.grip i { width: 104px; height: 7px; margin-left: 1px; border: 1px solid; border-color: #fff #808080 #808080 #fff; border-left: 0; border-right: 0; box-shadow: inset 0 1px #808080, inset 0 -1px #fff; }
.libpane { width: 133px; height: 590px; border: 1px solid; border-color: #fff #404040 #808080 #fff; padding: 9px 0 0 4px; box-shadow: inset -1px 0 #808080; }
.combo { width: 118px; height: 21px; display: flex; justify-content: space-between; padding-left: 3px; font-size: 12px; line-height: 18px; letter-spacing: -.55px; white-space: nowrap; }
.combo .sb { height: 17px; }
.preview { margin: 8px 0 0 2px; width: 118px; height: 118px; background: #fff; border-left: 1px solid #808080; border-top: 1px solid #808080; }
.chk { display: flex; margin: 4px 0 0 57px; height: 13px; gap: 7px; align-items: center; }
.chk svg { width: 13px; height: 13px; }
.filter { display: flex; margin: 6px 0 0 2px; height: 23px; }
.filter span { width: 33px; padding-top: 6px; letter-spacing: -.3px; }
.filter .sunken { width: 84px; padding: 2px 0 0 3px; font-size: 12px; }
.libpane ul { list-style: none; margin: 4px 0 0 2px; width: 118px; height: 372px; }
.libpane li { height: 13px; line-height: 13px; padding-left: 1px; white-space: nowrap; font-size: 12px; letter-spacing: -.4px; }
.libpane .sel { background: #0a246a; color: #fff; }
.dock { height: 309px; flex: none; border-top: 1px solid #808080; box-shadow: inset 0 1px #fff; display: flex; position: relative; }
.dock::before { content: ""; position: absolute; left: 0; right: 0; top: 4px; height: 2px; background: linear-gradient(#808080 50%, #000 50%); }
.strip { width: 19px; padding: 11px 0 0 5px; }
.strip .btn + .btn { margin-top: 1px; }
.strip i { display: block; width: 7px; height: 266px; margin: 2px 0 0 2px; border: solid; border-width: 0 1px; border-color: #fff #808080; background: linear-gradient(90deg, #d4d0c8 1px, #808080 1px 2px, transparent 2px 4px, #fff 4px); }
.timing { width: 938px; height: 295px; margin-top: 9px; border: 1px solid; border-color: #808080 #fff #fff #808080; box-shadow: inset 1px 1px #404040; padding: 2px 0 0 1px; }
.trow { height: 275px; display: flex; border-top: 1px solid #000; border-left: 1px solid #000; }
.names { width: 101px; background: #e6e6e6; text-align: right; font: 14px "Noto Sans", sans-serif; display: flex; flex-direction: column; }
.names span { height: 16px; line-height: 15px; padding-right: 3px; flex: none; }
.names .ns2 { height: 30px; line-height: 27px; }
.names .sel { background: #191919; color: #fff; }
.split { width: 5px; background: #d4d0c8; border-left: 1px solid #fff; border-right: 1px solid #808080; }
.plot { border-left: 1px solid #000; display: grid; grid-template-columns: 808px 16px; grid-template-rows: 256px 16px; background: #fff; width: 825px; height: 273px; }
.waves { font: 14px "Noto Sans", sans-serif; }
.sheets { height: 18px; margin-left: -1px; display: flex; border-top: 1px solid #000; position: relative; }
.sheets .btn { fill: #808080; stroke: #808080; }
.sheet1 { position: relative; margin-top: -1px; }
.sheet1 b { position: absolute; left: 7px; top: 2px; }
.status { height: 20px; display: flex; border-top: 1px solid #808080; box-shadow: inset 0 1px #fff; padding-top: 3px; font-size: 12px; }
.status span { width: 850px; letter-spacing: -.35px; }
.status i { height: 20px; border: 1px solid; border-color: #808080 #fff #fff #808080; }
.p1 { width: 26px; margin-right: 2px; }
.p2 { width: 30px; margin-right: 2px; text-align: center; letter-spacing: -.3px; }
.p3 { width: 32px; margin-right: 2px; }
```
